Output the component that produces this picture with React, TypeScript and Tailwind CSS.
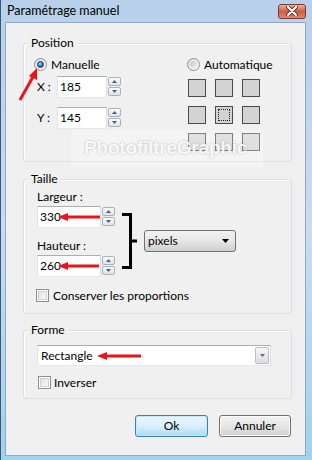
import React from 'react';

const ui = "font-['Lato',sans-serif] text-[12px] text-black";

function Spin() {
  return (
    <div className="ml-[1px] flex h-[20px] w-[13px] flex-col gap-[1px]">
      <div className="flex h-[9px] items-center justify-center rounded-[2px] border border-[#a9b1bb] bg-gradient-to-b from-[#fafbfc] to-[#dfe3e8]">
        <svg width="5" height="3" viewBox="0 0 5 3"><path d="M0 3 L2.5 0 L5 3 Z" fill="#4b5e80" /></svg>
      </div>
      <div className="flex h-[9px] items-center justify-center rounded-[2px] border border-[#a9b1bb] bg-gradient-to-b from-[#fafbfc] to-[#dfe3e8]">
        <svg width="5" height="3" viewBox="0 0 5 3"><path d="M0 0 L2.5 3 L5 0 Z" fill="#4b5e80" /></svg>
      </div>
    </div>
  );
}

function NumField({ value, width }: { value: string; width: string }) {
  return (
    <div className="flex items-center">
      <div
        className={`flex h-[22px] items-center border border-b-[#e3e9ef] border-l-[#e2e3ea] border-r-[#dbdfe6] border-t-[#abadb3] bg-white pl-[2px] ${width}`}
      >
        {value}
      </div>
      <Spin />
    </div>
  );
}

function Radio({ checked }: { checked?: boolean }) {
  return (
    <div className="flex h-[13px] w-[13px] items-center justify-center rounded-full border border-[#8e8f8f] bg-gradient-to-br from-[#dcdcdc] to-[#fbfbfb]">
      {checked ? (
        <div className="h-[7px] w-[7px] rounded-full border border-[#1b3a5a] bg-[radial-gradient(circle_at_40%_35%,#a6dcff,#2d74b5_55%,#143a63)]" />
      ) : (
        <div className="h-[7px] w-[7px] rounded-full bg-gradient-to-br from-[#c8c8c8] to-[#eeeeee]" />
      )}
    </div>
  );
}

function Check() {
  return (
    <div className="flex h-[13px] w-[13px] items-center justify-center border border-[#8f8f8f] bg-white">
      <div className="h-[9px] w-[9px] border border-[#d0d0d0] bg-gradient-to-br from-[#e1e1e1] to-[#f9f9f9]" />
    </div>
  );
}

function Group({ title, className, children }: { title: string; className: string; children: React.ReactNode }) {
  return (
    <div className={`relative rounded-[3px] border border-[#d5dfe5] shadow-[inset_1px_1px_0_#ffffff] ${className}`}>
      <span className="absolute left-[4px] top-[-9px] bg-[#f0f0f0] px-[3px] leading-[16px]">{title}</span>
      {children}
    </div>
  );
}

function Arrow({ className, w }: { className: string; w: number }) {
  return (
    <svg className={`absolute ${className}`} width={w} height="8" viewBox={`0 0 ${w} 8`}>
      <path d="M0 4 L10 0 L10 8 Z" fill="#e8141c" />
      <rect x="8" y="2.5" width={w - 8} height="3" fill="#e8141c" />
    </svg>
  );
}

export default function App() {
  return (
    <div className={`relative h-[460px] w-[312px] overflow-hidden border-l border-[#3c5878] bg-gradient-to-b from-[#b8d0ea] via-[#c9dcf0] to-[#9fd3ee] ${ui}`}>
      {/* title bar */}
      <div className="flex h-[22px] items-center justify-between pl-[6px] pr-[6px]">
        <span className="text-[12.5px] leading-none">Paramétrage manuel</span>
        <div className="flex h-[15px] w-[28px] items-center justify-center rounded-[3px] border border-[#7a3a30] bg-gradient-to-b from-[#eab3a3] via-[#cf5a44] to-[#d98a74]">
          <svg width="12" height="10" viewBox="0 0 12 10">
            <path d="M2 1 L10 9 M10 1 L2 9" stroke="#6a2a20" strokeWidth="4" strokeLinecap="round" />
            <path d="M2 1 L10 9 M10 1 L2 9" stroke="#ffffff" strokeWidth="2.2" strokeLinecap="round" />
          </svg>
        </div>
      </div>

      {/* client area */}
      <div className="ml-[4px] mr-[6px] flex h-[434px] flex-col border border-[#8fa9c4] bg-[#f0f0f0] pl-[17px] pr-[13px]">
        <Group title="Position" className="mt-[20px] pb-[10px] pl-[10px] pt-[14px]">
          <div className="flex">
            <div className="flex w-[153px] flex-col">
              <div className="flex h-[13px] items-center gap-[4px]">
                <Radio checked />
                <span>Manuelle</span>
              </div>
              <div className="mt-[5px] flex items-center">
                <span className="w-[23px] pl-[3px]">X :</span>
                <NumField value="185" width="w-[50px]" />
              </div>
              <div className="mt-[9px] flex items-center">
                <span className="w-[23px] pl-[3px]">Y :</span>
                <NumField value="145" width="w-[50px]" />
              </div>
            </div>
            <div className="flex flex-col">
              <div className="flex h-[13px] items-center gap-[4px]">
                <Radio />
                <span>Automatique</span>
              </div>
              <div className="ml-[1px] mt-[8px] grid w-[72px] grid-cols-3 gap-[9px]">
                {[0, 1, 2, 3, 4, 5, 6, 7, 8].map((i) => (
                  <div key={i} className="flex h-[18px] w-[18px] items-center justify-center border border-[#4a4a4a] bg-[#d3d3d3]">
                    {i === 4 && <div className="h-[12px] w-[12px] border border-dotted border-[#222]" />}
                  </div>
                ))}
              </div>
            </div>
          </div>
        </Group>

        <Group title="Taille" className="mt-[17px] pb-[11px] pl-[13px] pt-[9px]">
          <div className="flex items-start">
            <div className="flex w-[107px] flex-col">
              <span className="leading-[16px]">Largeur :</span>
              <div className="mt-[1px]">
                <NumField value="330" width="w-[64px]" />
              </div>
              <span className="mt-[10px] leading-[16px]">Hauteur :</span>
              <div className="mt-[1px]">
                <NumField value="260" width="w-[64px]" />
              </div>
            </div>
            <div className="mt-[41px] flex h-[22px] w-[92px] items-center justify-between rounded-[3px] border border-[#707070] bg-gradient-to-b from-[#f2f2f2] via-[#e6e6e6] to-[#cfcfcf] pl-[3px] pr-[6px]">
              <span>pixels</span>
              <svg width="7" height="4" viewBox="0 0 7 4"><path d="M0 0 L7 0 L3.5 4 Z" fill="#000" /></svg>
            </div>
          </div>
          <div className="-ml-[1px] mt-[12px] flex items-center gap-[4px]">
            <Check />
            <span className="leading-[13px]">Conserver les proportions</span>
          </div>
        </Group>

        <Group title="Forme" className="mt-[16px] pb-[9px] pl-[13px] pt-[14px]">
          <div className="flex h-[21px] w-[234px] items-center justify-between border border-b-[#e3e9ef] border-l-[#e2e3ea] border-r-[#dbdfe6] border-t-[#abadb3] bg-white pl-[3px] pr-[1px]">
            <span>Rectangle</span>
            <div className="flex h-[17px] w-[14px] items-center justify-center rounded-[2px] border border-[#b9bec6] bg-gradient-to-b from-[#f7f7f7] to-[#dcdcdc]">
              <svg width="5" height="3" viewBox="0 0 5 3"><path d="M0 0 L5 0 L2.5 3 Z" fill="#6b6b6b" /></svg>
            </div>
          </div>
          <div className="ml-[1px] mt-[10px] flex items-center gap-[3px]">
            <Check />
            <span className="leading-[13px]">Inverser</span>
          </div>
        </Group>

        <div className="mt-[16px] flex justify-end gap-[11px] pr-[1px]">
          <div className="flex h-[22px] w-[73px] items-center justify-center rounded-[3px] border border-[#3c7fb1] bg-gradient-to-b from-[#eaf6fd] via-[#d9f0fc] to-[#a7d9f5] shadow-[inset_0_0_0_1px_#c4e9fb]">
            Ok
          </div>
          <div className="flex h-[22px] w-[72px] items-center justify-center rounded-[3px] border border-[#707070] bg-gradient-to-b from-[#f2f2f2] via-[#e6e6e6] to-[#cfcfcf] shadow-[inset_0_0_0_1px_#fcfcfc]">
            Annuler
          </div>
        </div>
      </div>

      {/* annotations */}
      <svg className="absolute left-[16px] top-[66px]" width="24" height="36" viewBox="0 0 24 36">
        <path d="M3 34 L17 9" stroke="#e8141c" strokeWidth="3" />
        <path d="M20 2 L12 10 L20 14 Z" fill="#e8141c" />
      </svg>
      <Arrow className="left-[57px] top-[213px]" w={42} />
      <Arrow className="left-[57px] top-[262px]" w={41} />
      <Arrow className="left-[96px] top-[352px]" w={44} />
      <svg className="absolute left-[121px] top-[213px]" width="16" height="56" viewBox="0 0 16 56">
        <path d="M0 1.5 H8.5 V54.5 H0 M8.5 28 H15" stroke="#000" strokeWidth="3" fill="none" />
      </svg>

      {/* watermark */}
      <div className="absolute left-[70px] top-[130px] flex h-[37px] w-[192px] items-center bg-white/30 pl-[13px]">
        <span className="font-['Liberation_Sans',sans-serif] text-[19px] font-bold tracking-[-0.2px] text-white/90 [text-shadow:0_0_2px_rgba(0,0,0,0.3)]">
          PhotofiltreGraphic
        </span>
      </div>
    </div>
  );
}
